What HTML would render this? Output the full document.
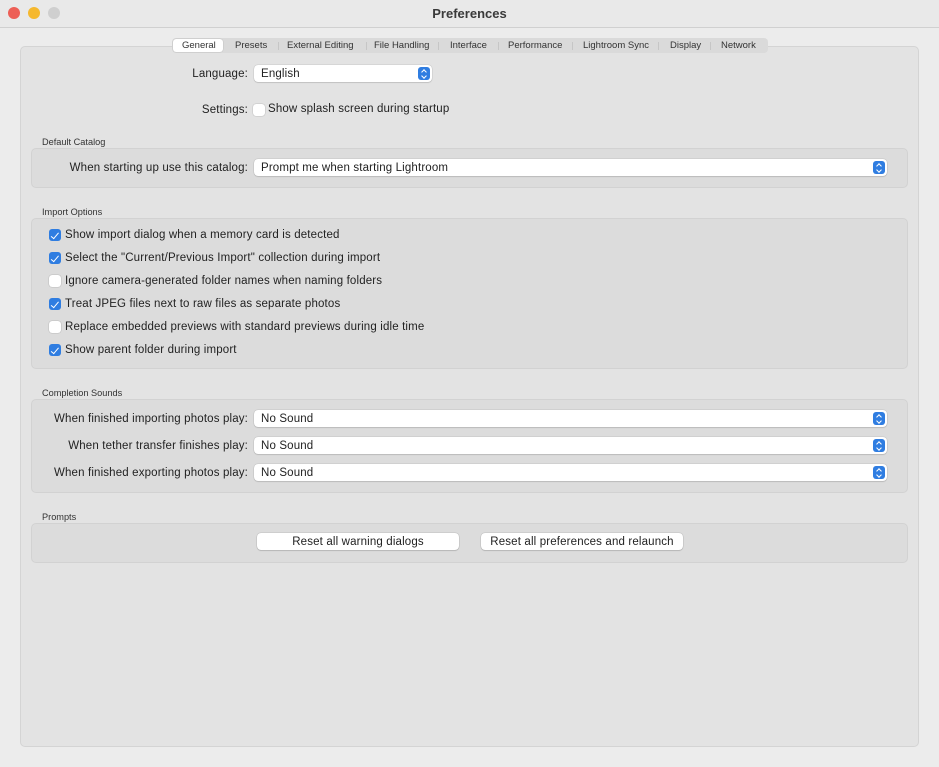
<!DOCTYPE html>
<html><head><meta charset="utf-8"><style>
*{box-sizing:border-box;margin:0;padding:0}
body{width:939px;height:767px;background:#ececec;font-family:"Liberation Sans",sans-serif;color:#222;position:relative;overflow:hidden}
.a{position:absolute}
.title{left:0;top:0;width:939px;height:28px;background:#e9e9e9;border-bottom:1px solid #d0d0d0;text-align:center;font-weight:bold;font-size:13px;line-height:27px;color:#3a3a3a}
.dot{top:7px;width:12px;height:12px;border-radius:50%}
.panel{left:20px;top:46px;width:899px;height:701px;background:#e3e3e3;border:1px solid #d4d4d4;border-radius:5px}
.tabs{left:172px;top:38px;width:596px;height:15px;background:#dadada;border-radius:4px;font-size:9.5px;color:#333;white-space:nowrap}
.tabs span{position:absolute;top:2px}
.sel{left:1px;top:1px;width:50px;height:13px;background:#fff;border-radius:3px;box-shadow:0 0 1px rgba(0,0,0,.3)}
.sep{position:absolute;top:4px;width:1px;height:8px;background:#c6c6c6}
.lbl{font-size:11.5px;letter-spacing:.15px;white-space:nowrap}
.r{text-align:right}
.hdr{font-size:9.2px;color:#333;left:42px}
.grp{left:31px;width:877px;background:#dcdcdc;border:1px solid #d2d2d2;border-radius:5px}
.pop{height:17px;background:#fff;border-radius:4px;box-shadow:0 0 1px rgba(0,0,0,.35),0 1px 1px rgba(0,0,0,.1);font-size:11.5px;letter-spacing:.15px;line-height:19px;padding-left:7px}
.pop i{position:absolute;right:2px;top:2px;width:12px;height:13px;background:#2f7de1;border-radius:3px}
.pop i:before{content:"";position:absolute;left:3.5px;top:2.5px;width:3px;height:3px;border-left:1.3px solid #fff;border-top:1.3px solid #fff;transform:rotate(45deg)}
.pop i:after{content:"";position:absolute;left:3.5px;top:6.5px;width:3px;height:3px;border-right:1.3px solid #fff;border-bottom:1.3px solid #fff;transform:rotate(45deg)}
.cb{width:12px;height:12px;border-radius:3px;background:#fff;box-shadow:0 0 1px rgba(0,0,0,.45)}
.cb.on{background:#2f7de1;box-shadow:none}
.cb.on:after{content:"";position:absolute;left:4px;top:1.5px;width:3px;height:6.5px;border-right:1.6px solid #fff;border-bottom:1.6px solid #fff;transform:rotate(40deg)}
.btn{height:17px;background:#fff;border-radius:4px;box-shadow:0 0 1px rgba(0,0,0,.4),0 1px 1px rgba(0,0,0,.12);font-size:11.5px;letter-spacing:.15px;line-height:19px;text-align:center}
</style></head><body>
<div class="a title">Preferences</div>
<div class="a dot" style="left:8px;background:#ed5f56"></div>
<div class="a dot" style="left:28px;background:#f5b82e"></div>
<div class="a dot" style="left:48px;background:#cfcfcf"></div>
<div class="a panel"></div>
<div class="a tabs">
<div class="a sel"></div>
<span style="left:10px">General</span>
<span style="left:63px">Presets</span><div class="sep" style="left:106px"></div>
<span style="left:115px">External Editing</span><div class="sep" style="left:194px"></div>
<span style="left:202px">File Handling</span><div class="sep" style="left:266px"></div>
<span style="left:278px">Interface</span><div class="sep" style="left:326px"></div>
<span style="left:336px">Performance</span><div class="sep" style="left:400px"></div>
<span style="left:411px">Lightroom Sync</span><div class="sep" style="left:486px"></div>
<span style="left:498px">Display</span><div class="sep" style="left:538px"></div>
<span style="left:549px">Network</span>
</div>

<div class="a lbl r" style="right:691px;top:68px">Language:</div>
<div class="a pop" style="left:254px;top:65px;width:178px">English<i></i></div>
<div class="a lbl r" style="right:691px;top:104px">Settings:</div>
<div class="a cb" style="left:253px;top:104px"></div>
<div class="a lbl" style="left:268px;top:103px">Show splash screen during startup</div>

<div class="a hdr" style="top:137px">Default Catalog</div>
<div class="a grp" style="top:148px;height:40px"></div>
<div class="a lbl r" style="right:691px;top:162px">When starting up use this catalog:</div>
<div class="a pop" style="left:254px;top:159px;width:633px">Prompt me when starting Lightroom<i></i></div>

<div class="a hdr" style="top:207px">Import Options</div>
<div class="a grp" style="top:218px;height:151px"></div>
<div class="a cb on" style="left:49px;top:229px"></div><div class="a lbl" style="left:65px;top:229px">Show import dialog when a memory card is detected</div>
<div class="a cb on" style="left:49px;top:252px"></div><div class="a lbl" style="left:65px;top:252px">Select the "Current/Previous Import" collection during import</div>
<div class="a cb" style="left:49px;top:275px"></div><div class="a lbl" style="left:65px;top:275px">Ignore camera-generated folder names when naming folders</div>
<div class="a cb on" style="left:49px;top:298px"></div><div class="a lbl" style="left:65px;top:298px">Treat JPEG files next to raw files as separate photos</div>
<div class="a cb" style="left:49px;top:321px"></div><div class="a lbl" style="left:65px;top:321px">Replace embedded previews with standard previews during idle time</div>
<div class="a cb on" style="left:49px;top:344px"></div><div class="a lbl" style="left:65px;top:344px">Show parent folder during import</div>

<div class="a hdr" style="top:388px">Completion Sounds</div>
<div class="a grp" style="top:399px;height:94px"></div>
<div class="a lbl r" style="right:691px;top:413px">When finished importing photos play:</div>
<div class="a pop" style="left:254px;top:410px;width:633px">No Sound<i></i></div>
<div class="a lbl r" style="right:691px;top:440px">When tether transfer finishes play:</div>
<div class="a pop" style="left:254px;top:437px;width:633px">No Sound<i></i></div>
<div class="a lbl r" style="right:691px;top:467px">When finished exporting photos play:</div>
<div class="a pop" style="left:254px;top:464px;width:633px">No Sound<i></i></div>

<div class="a hdr" style="top:512px">Prompts</div>
<div class="a grp" style="top:523px;height:40px"></div>
<div class="a btn" style="left:257px;top:533px;width:202px">Reset all warning dialogs</div>
<div class="a btn" style="left:481px;top:533px;width:202px">Reset all preferences and relaunch</div>
</body></html>
